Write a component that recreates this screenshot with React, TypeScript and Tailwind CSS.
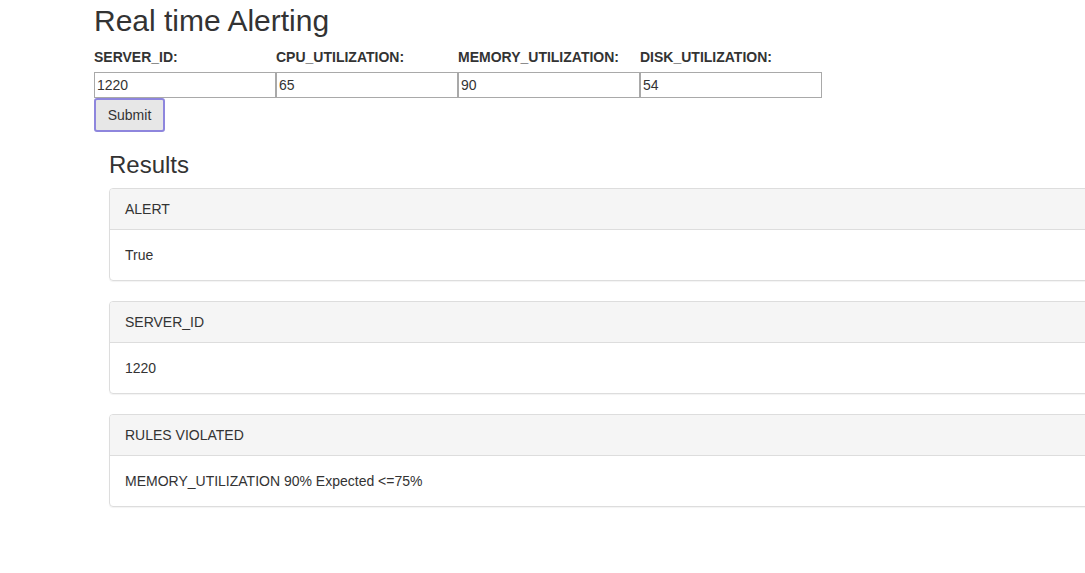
const fields = [
  { label: "SERVER_ID:", value: "1220" },
  { label: "CPU_UTILIZATION:", value: "65" },
  { label: "MEMORY_UTILIZATION:", value: "90" },
  { label: "DISK_UTILIZATION:", value: "54" },
];

const results = [
  { title: "ALERT", body: "True" },
  { title: "SERVER_ID", body: "1220" },
  { title: "RULES VIOLATED", body: "MEMORY_UTILIZATION 90% Expected <=75%" },
];

export default function App() {
  return (
    <div
      className="w-[1085px] h-[573px] overflow-hidden bg-white text-[#333] text-[14px]"
      style={{ fontFamily: '"Liberation Sans", Arial, sans-serif' }}
    >
      <div className="pl-[94px]">
        <h1 className="text-[30px] leading-[42px] pt-0 text-[#333]">Real time Alerting</h1>
        <form className="mt-[5px]" onSubmit={(e) => e.preventDefault()}>
          <div className="flex">
            {fields.map((f) => (
              <div key={f.label} className="w-[182px] flex flex-col">
                <label className="font-bold text-[14px] leading-[20px]">{f.label}</label>
                <input
                  defaultValue={f.value}
                  className="mt-[5px] h-[26px] w-[182px] border border-[#a9a9a9] px-[2px] text-[14px] text-[#333] outline-none"
                />
              </div>
            ))}
          </div>
          <button
            type="submit"
            className="h-[34px] w-[71px] rounded-[3px] border-2 border-[#8e86dd] bg-[#e7e7e7] text-[14px] text-[#333]"
          >
            Submit
          </button>
        </form>
        <div className="pl-[15px] mt-[18px]">
          <h3 className="text-[24px] leading-[30px] mb-[8px]">Results</h3>
          {results.map((r) => (
            <div
              key={r.title}
              className="w-[1000px] mb-[20px] rounded-[4px] border border-[#ddd] shadow-[0_1px_1px_rgba(0,0,0,0.05)]"
            >
              <div className="bg-[#f5f5f5] border-b border-[#ddd] px-[15px] py-[10px] leading-[20px] rounded-t-[3px]">
                {r.title}
              </div>
              <div className="px-[15px] py-[15px] leading-[20px]">{r.body}</div>
            </div>
          ))}
        </div>
      </div>
    </div>
  );
}
